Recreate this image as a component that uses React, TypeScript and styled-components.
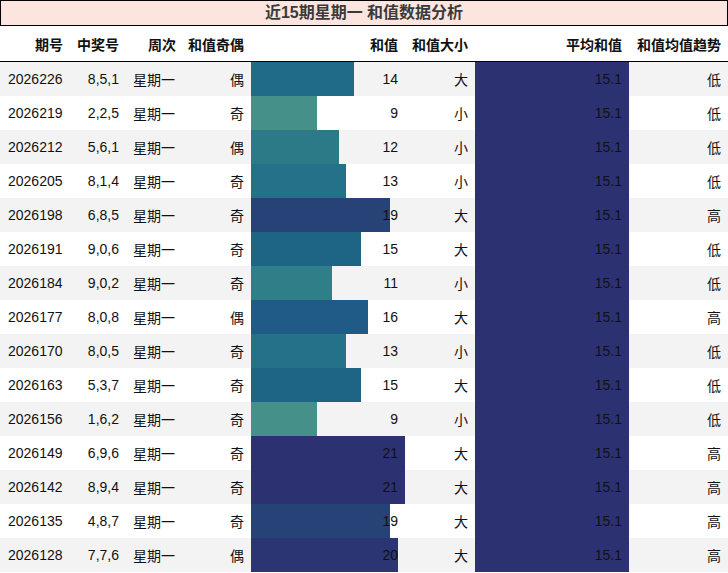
import React from "react";
import styled, { createGlobalStyle } from "styled-components";

const Global = createGlobalStyle`
  html, body { margin: 0; padding: 0; background: #ffffff; }
  body { font-family: "Liberation Sans", Arial, "Noto Sans CJK SC", sans-serif; }
`;

const COLS = "70px 56px 57px 68px 154px 70px 154px 99px";

const Page = styled.div`
  width: 728px;
  height: 573px;
  overflow: hidden;
  background: #ffffff;
  color: #111111;
`;

const Title = styled.div`
  height: 24px;
  border: 1px solid #000000;
  background: #fde5df;
  color: #3a3a3a;
  font-family: "Liberation Sans", "Noto Sans CJK SC", sans-serif;
  font-weight: 700;
  font-size: 16px;
  line-height: 24px;
  text-align: center;
`;

const HeaderRow = styled.div`
  display: grid;
  grid-template-columns: ${COLS};
  height: 35px;
  border-bottom: 1px solid #000000;
`;

const HeadCell = styled.div`
  display: flex;
  align-items: center;
  justify-content: flex-end;
  padding: 0 7px;
  font-family: "Liberation Sans", "Noto Sans CJK SC", sans-serif;
  font-weight: 700;
  font-size: 14px;
  color: #111111;
  white-space: nowrap;
`;

const Row = styled.div<{ $shade: boolean }>`
  display: grid;
  grid-template-columns: ${COLS};
  height: 34px;
  background: ${(p) => (p.$shade ? "#f3f3f3" : "#ffffff")};
`;

const Cell = styled.div<{ $align?: "left" | "right" }>`
  display: flex;
  align-items: center;
  justify-content: ${(p) => (p.$align === "left" ? "flex-start" : "flex-end")};
  padding: ${(p) => (p.$align === "left" ? "0 0 0 8px" : "0 7px 0 0")};
  font-size: 14px;
  font-family: "Liberation Sans", "Noto Sans CJK SC", sans-serif;
  color: #111111;
  white-space: nowrap;
`;

const WeekCell = styled(Cell)`
  justify-content: flex-start;
  padding: 0 0 0 7px;
`;

const BarCell = styled(Cell)`
  background-repeat: no-repeat;
`;

const colorFor: Record<number, string> = {
  9: "#45918a",
  10: "#3a888a",
  11: "#2f7f89",
  12: "#2c7a88",
  13: "#24728a",
  14: "#1f6b88",
  15: "#1e6585",
  16: "#1f5b86",
  17: "#22527f",
  18: "#254a7b",
  19: "#274277",
  20: "#2b3573",
  21: "#2c3172",
};

type Rec = { id: string; nums: string; parity: string; sum: number; size: string; trend: string };

const data: Rec[] = [
  { id: "2026226", nums: "8,5,1", parity: "偶", sum: 14, size: "大", trend: "低" },
  { id: "2026219", nums: "2,2,5", parity: "奇", sum: 9, size: "小", trend: "低" },
  { id: "2026212", nums: "5,6,1", parity: "偶", sum: 12, size: "小", trend: "低" },
  { id: "2026205", nums: "8,1,4", parity: "奇", sum: 13, size: "小", trend: "低" },
  { id: "2026198", nums: "6,8,5", parity: "奇", sum: 19, size: "大", trend: "高" },
  { id: "2026191", nums: "9,0,6", parity: "奇", sum: 15, size: "大", trend: "低" },
  { id: "2026184", nums: "9,0,2", parity: "奇", sum: 11, size: "小", trend: "低" },
  { id: "2026177", nums: "8,0,8", parity: "偶", sum: 16, size: "大", trend: "高" },
  { id: "2026170", nums: "8,0,5", parity: "奇", sum: 13, size: "小", trend: "低" },
  { id: "2026163", nums: "5,3,7", parity: "奇", sum: 15, size: "大", trend: "低" },
  { id: "2026156", nums: "1,6,2", parity: "奇", sum: 9, size: "小", trend: "低" },
  { id: "2026149", nums: "6,9,6", parity: "奇", sum: 21, size: "大", trend: "高" },
  { id: "2026142", nums: "8,9,4", parity: "奇", sum: 21, size: "大", trend: "高" },
  { id: "2026135", nums: "4,8,7", parity: "奇", sum: 19, size: "大", trend: "高" },
  { id: "2026128", nums: "7,7,6", parity: "偶", sum: 20, size: "大", trend: "高" },
];

const maxSum = Math.max(...data.map((d) => d.sum));
const avg = data.reduce((a, d) => a + d.sum, 0) / data.length;

const barBg = (pct: number, color: string) =>
  `linear-gradient(90deg, ${color} 0%, ${color} ${pct}%, transparent ${pct}%, transparent 100%)`;

const headers = ["期号", "中奖号", "周次", "和值奇偶", "和值", "和值大小", "平均和值", "和值均值趋势"];

export default function App() {
  return (
    <Page>
      <Global />
      <Title>近15期星期一 和值数据分析</Title>
      <HeaderRow>
        {headers.map((h) => (
          <HeadCell key={h}>{h}</HeadCell>
        ))}
      </HeaderRow>
      {data.map((d, i) => (
        <Row key={d.id} $shade={i % 2 === 0}>
          <Cell $align="left">{d.id}</Cell>
          <Cell>{d.nums}</Cell>
          <WeekCell>星期一</WeekCell>
          <Cell>{d.parity}</Cell>
          <BarCell style={{ background: barBg((d.sum / maxSum) * 100, colorFor[d.sum]) }}>{d.sum}</BarCell>
          <Cell>{d.size}</Cell>
          <BarCell style={{ background: barBg(100, "#2c3172") }}>{avg.toFixed(1)}</BarCell>
          <Cell>{d.trend}</Cell>
        </Row>
      ))}
    </Page>
  );
}
